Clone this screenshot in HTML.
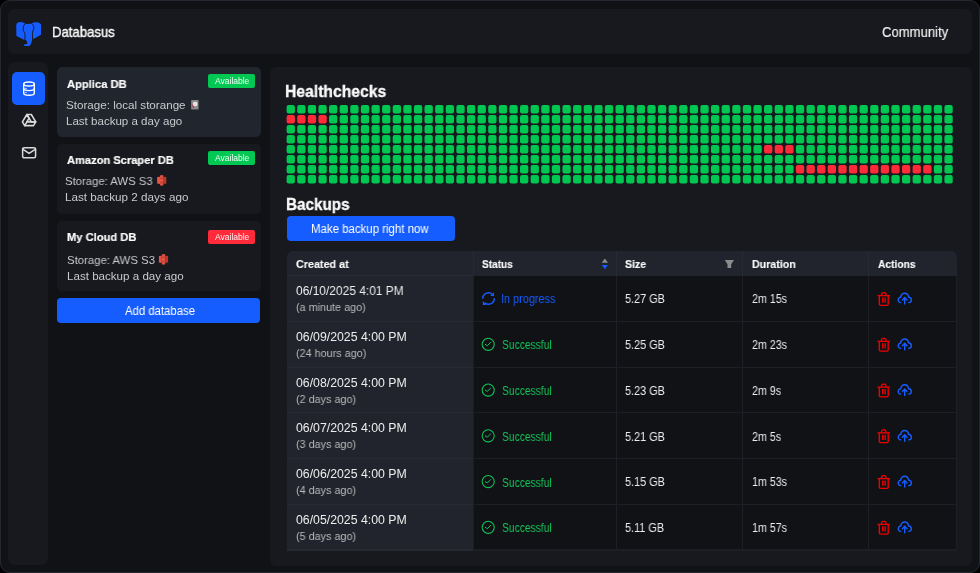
<!DOCTYPE html>
<html><head><meta charset="utf-8"><style>
*{box-sizing:border-box;margin:0;padding:0}
html,body{width:980px;height:573px;background:#000;overflow:hidden;font-family:"Liberation Sans",sans-serif;color:#f0f0f0}
.a{position:absolute}
.t{position:absolute;white-space:nowrap;line-height:40px;transform-origin:0 0;will-change:transform}
#frame{position:absolute;left:0;top:0;width:980px;height:573px;border-radius:10px;background:#111216;overflow:hidden}
#bord{position:absolute;left:0;top:0;width:980px;height:573px;border-radius:10px;border:1px solid #252830}
.panel{position:absolute;background:#18191e;border-radius:6px}
.card{position:absolute;left:57px;width:204px;height:70px;border-radius:5px;background:#18191e}
.card.sel{background:#21252e}
.badge{position:absolute;left:208px;width:47px;height:14px;border-radius:2px}
.green{background:#00c853}
.red{background:#ff2b3a}
.btn{position:absolute;background:#165dff;border-radius:4px}
</style></head><body>
<div id="frame">
<div class="panel" style="left:8px;top:9px;width:964px;height:45px"></div>
<div class="t" style="left:51.89px;top:12.00px;font-size:14.5px;font-weight:normal;color:#f8f8f8;transform:scaleX(0.9059);-webkit-text-stroke:0.4px #f8f8f8">Databasus</div>
<div class="t" style="left:881.90px;top:12.20px;font-size:14.5px;font-weight:normal;color:#f4f4f4;transform:scaleX(0.9041);-webkit-text-stroke:0.15px #f4f4f4">Community</div>
<div class="panel" style="left:8px;top:62px;width:40px;height:503px"></div>
<div class="a" style="left:12px;top:72px;width:33px;height:33px;border-radius:5px;background:#165dff"></div>
<div class="card sel" style="top:67px"></div>
<div class="card" style="top:144px"></div>
<div class="card" style="top:221px"></div>
<div class="badge green" style="top:74px"></div>
<div class="badge green" style="top:151.4px"></div>
<div class="badge red" style="top:230px"></div>
<div class="t" style="left:215.10px;top:60.80px;font-size:8.5px;font-weight:normal;color:#f4fff6;transform:scaleX(0.9971);">Available</div>
<div class="t" style="left:215.10px;top:138.20px;font-size:8.5px;font-weight:normal;color:#f4fff6;transform:scaleX(0.9971);">Available</div>
<div class="t" style="left:215.10px;top:216.80px;font-size:8.5px;font-weight:normal;color:#fff4f4;transform:scaleX(0.9971);">Available</div>
<div class="t" style="left:67.10px;top:63.60px;font-size:11.5px;font-weight:bold;color:#fcfcfc;transform:scaleX(0.9721);-webkit-text-stroke:0.2px #fcfcfc">Applica DB</div>
<div class="t" style="left:66.40px;top:84.90px;font-size:11.5px;font-weight:normal;color:#c9cacd;transform:scaleX(1.011);">Storage: local storange</div>
<div class="t" style="left:66.40px;top:101.00px;font-size:11.5px;font-weight:normal;color:#c9cacd;transform:scaleX(1.0043);">Last backup a day ago</div>
<div class="t" style="left:67.10px;top:140.00px;font-size:11.5px;font-weight:bold;color:#fcfcfc;transform:scaleX(0.9658);-webkit-text-stroke:0.2px #fcfcfc">Amazon Scraper DB</div>
<div class="t" style="left:65.40px;top:161.00px;font-size:11.5px;font-weight:normal;color:#c9cacd;transform:scaleX(0.9831);">Storage: AWS S3</div>
<div class="t" style="left:65.40px;top:176.70px;font-size:11.5px;font-weight:normal;color:#c9cacd;transform:scaleX(1.0157);">Last backup 2 days ago</div>
<div class="t" style="left:67.10px;top:217.30px;font-size:11.5px;font-weight:bold;color:#fcfcfc;transform:scaleX(0.9694);-webkit-text-stroke:0.2px #fcfcfc">My Cloud DB</div>
<div class="t" style="left:67.10px;top:240.10px;font-size:11.5px;font-weight:normal;color:#c9cacd;transform:scaleX(0.9876);">Storage: AWS S3</div>
<div class="t" style="left:67.10px;top:255.90px;font-size:11.5px;font-weight:normal;color:#c9cacd;transform:scaleX(1.0078);">Last backup a day ago</div>
<div class="btn" style="left:57px;top:298px;width:203px;height:25px"></div>
<div class="t" style="left:125.30px;top:290.60px;font-size:12.0px;font-weight:normal;color:#ffffff;transform:scaleX(0.9446);">Add database</div>
<div class="panel" style="left:270px;top:67px;width:702px;height:499px"></div>
<div class="t" style="left:285.38px;top:71.50px;font-size:17.0px;font-weight:bold;color:#fafafa;transform:scaleX(0.9229);-webkit-text-stroke:0.35px #fafafa">Healthchecks</div>
<svg class="a" style="left:0;top:0" width="980" height="200" viewBox="0 0 980 200"><defs><rect id="q" width="8.3" height="8.4" rx="2"/></defs><g transform="translate(286.6,105.0)"><g fill="#00c752"><use href="#q" x="0.00" y="0"/><use href="#q" x="10.61" y="0"/><use href="#q" x="21.22" y="0"/><use href="#q" x="31.83" y="0"/><use href="#q" x="42.44" y="0"/><use href="#q" x="53.05" y="0"/><use href="#q" x="63.66" y="0"/><use href="#q" x="74.27" y="0"/><use href="#q" x="84.88" y="0"/><use href="#q" x="95.49" y="0"/><use href="#q" x="106.10" y="0"/><use href="#q" x="116.71" y="0"/><use href="#q" x="127.32" y="0"/><use href="#q" x="137.93" y="0"/><use href="#q" x="148.54" y="0"/><use href="#q" x="159.15" y="0"/><use href="#q" x="169.76" y="0"/><use href="#q" x="180.37" y="0"/><use href="#q" x="190.98" y="0"/><use href="#q" x="201.59" y="0"/><use href="#q" x="212.20" y="0"/><use href="#q" x="222.81" y="0"/><use href="#q" x="233.42" y="0"/><use href="#q" x="244.03" y="0"/><use href="#q" x="254.64" y="0"/><use href="#q" x="265.25" y="0"/><use href="#q" x="275.86" y="0"/><use href="#q" x="286.47" y="0"/><use href="#q" x="297.08" y="0"/><use href="#q" x="307.69" y="0"/><use href="#q" x="318.30" y="0"/><use href="#q" x="328.91" y="0"/><use href="#q" x="339.52" y="0"/><use href="#q" x="350.13" y="0"/><use href="#q" x="360.74" y="0"/><use href="#q" x="371.35" y="0"/><use href="#q" x="381.96" y="0"/><use href="#q" x="392.57" y="0"/><use href="#q" x="403.18" y="0"/><use href="#q" x="413.79" y="0"/><use href="#q" x="424.40" y="0"/><use href="#q" x="435.01" y="0"/><use href="#q" x="445.62" y="0"/><use href="#q" x="456.23" y="0"/><use href="#q" x="466.84" y="0"/><use href="#q" x="477.45" y="0"/><use href="#q" x="488.06" y="0"/><use href="#q" x="498.67" y="0"/><use href="#q" x="509.28" y="0"/><use href="#q" x="519.89" y="0"/><use href="#q" x="530.50" y="0"/><use href="#q" x="541.11" y="0"/><use href="#q" x="551.72" y="0"/><use href="#q" x="562.33" y="0"/><use href="#q" x="572.94" y="0"/><use href="#q" x="583.55" y="0"/><use href="#q" x="594.16" y="0"/><use href="#q" x="604.77" y="0"/><use href="#q" x="615.38" y="0"/><use href="#q" x="625.99" y="0"/><use href="#q" x="636.60" y="0"/><use href="#q" x="647.21" y="0"/><use href="#q" x="657.82" y="0"/><use href="#q" x="42.44" y="10"/><use href="#q" x="53.05" y="10"/><use href="#q" x="63.66" y="10"/><use href="#q" x="74.27" y="10"/><use href="#q" x="84.88" y="10"/><use href="#q" x="95.49" y="10"/><use href="#q" x="106.10" y="10"/><use href="#q" x="116.71" y="10"/><use href="#q" x="127.32" y="10"/><use href="#q" x="137.93" y="10"/><use href="#q" x="148.54" y="10"/><use href="#q" x="159.15" y="10"/><use href="#q" x="169.76" y="10"/><use href="#q" x="180.37" y="10"/><use href="#q" x="190.98" y="10"/><use href="#q" x="201.59" y="10"/><use href="#q" x="212.20" y="10"/><use href="#q" x="222.81" y="10"/><use href="#q" x="233.42" y="10"/><use href="#q" x="244.03" y="10"/><use href="#q" x="254.64" y="10"/><use href="#q" x="265.25" y="10"/><use href="#q" x="275.86" y="10"/><use href="#q" x="286.47" y="10"/><use href="#q" x="297.08" y="10"/><use href="#q" x="307.69" y="10"/><use href="#q" x="318.30" y="10"/><use href="#q" x="328.91" y="10"/><use href="#q" x="339.52" y="10"/><use href="#q" x="350.13" y="10"/><use href="#q" x="360.74" y="10"/><use href="#q" x="371.35" y="10"/><use href="#q" x="381.96" y="10"/><use href="#q" x="392.57" y="10"/><use href="#q" x="403.18" y="10"/><use href="#q" x="413.79" y="10"/><use href="#q" x="424.40" y="10"/><use href="#q" x="435.01" y="10"/><use href="#q" x="445.62" y="10"/><use href="#q" x="456.23" y="10"/><use href="#q" x="466.84" y="10"/><use href="#q" x="477.45" y="10"/><use href="#q" x="488.06" y="10"/><use href="#q" x="498.67" y="10"/><use href="#q" x="509.28" y="10"/><use href="#q" x="519.89" y="10"/><use href="#q" x="530.50" y="10"/><use href="#q" x="541.11" y="10"/><use href="#q" x="551.72" y="10"/><use href="#q" x="562.33" y="10"/><use href="#q" x="572.94" y="10"/><use href="#q" x="583.55" y="10"/><use href="#q" x="594.16" y="10"/><use href="#q" x="604.77" y="10"/><use href="#q" x="615.38" y="10"/><use href="#q" x="625.99" y="10"/><use href="#q" x="636.60" y="10"/><use href="#q" x="647.21" y="10"/><use href="#q" x="657.82" y="10"/><use href="#q" x="0.00" y="20"/><use href="#q" x="10.61" y="20"/><use href="#q" x="21.22" y="20"/><use href="#q" x="31.83" y="20"/><use href="#q" x="42.44" y="20"/><use href="#q" x="53.05" y="20"/><use href="#q" x="63.66" y="20"/><use href="#q" x="74.27" y="20"/><use href="#q" x="84.88" y="20"/><use href="#q" x="95.49" y="20"/><use href="#q" x="106.10" y="20"/><use href="#q" x="116.71" y="20"/><use href="#q" x="127.32" y="20"/><use href="#q" x="137.93" y="20"/><use href="#q" x="148.54" y="20"/><use href="#q" x="159.15" y="20"/><use href="#q" x="169.76" y="20"/><use href="#q" x="180.37" y="20"/><use href="#q" x="190.98" y="20"/><use href="#q" x="201.59" y="20"/><use href="#q" x="212.20" y="20"/><use href="#q" x="222.81" y="20"/><use href="#q" x="233.42" y="20"/><use href="#q" x="244.03" y="20"/><use href="#q" x="254.64" y="20"/><use href="#q" x="265.25" y="20"/><use href="#q" x="275.86" y="20"/><use href="#q" x="286.47" y="20"/><use href="#q" x="297.08" y="20"/><use href="#q" x="307.69" y="20"/><use href="#q" x="318.30" y="20"/><use href="#q" x="328.91" y="20"/><use href="#q" x="339.52" y="20"/><use href="#q" x="350.13" y="20"/><use href="#q" x="360.74" y="20"/><use href="#q" x="371.35" y="20"/><use href="#q" x="381.96" y="20"/><use href="#q" x="392.57" y="20"/><use href="#q" x="403.18" y="20"/><use href="#q" x="413.79" y="20"/><use href="#q" x="424.40" y="20"/><use href="#q" x="435.01" y="20"/><use href="#q" x="445.62" y="20"/><use href="#q" x="456.23" y="20"/><use href="#q" x="466.84" y="20"/><use href="#q" x="477.45" y="20"/><use href="#q" x="488.06" y="20"/><use href="#q" x="498.67" y="20"/><use href="#q" x="509.28" y="20"/><use href="#q" x="519.89" y="20"/><use href="#q" x="530.50" y="20"/><use href="#q" x="541.11" y="20"/><use href="#q" x="551.72" y="20"/><use href="#q" x="562.33" y="20"/><use href="#q" x="572.94" y="20"/><use href="#q" x="583.55" y="20"/><use href="#q" x="594.16" y="20"/><use href="#q" x="604.77" y="20"/><use href="#q" x="615.38" y="20"/><use href="#q" x="625.99" y="20"/><use href="#q" x="636.60" y="20"/><use href="#q" x="647.21" y="20"/><use href="#q" x="657.82" y="20"/><use href="#q" x="0.00" y="30"/><use href="#q" x="10.61" y="30"/><use href="#q" x="21.22" y="30"/><use href="#q" x="31.83" y="30"/><use href="#q" x="42.44" y="30"/><use href="#q" x="53.05" y="30"/><use href="#q" x="63.66" y="30"/><use href="#q" x="74.27" y="30"/><use href="#q" x="84.88" y="30"/><use href="#q" x="95.49" y="30"/><use href="#q" x="106.10" y="30"/><use href="#q" x="116.71" y="30"/><use href="#q" x="127.32" y="30"/><use href="#q" x="137.93" y="30"/><use href="#q" x="148.54" y="30"/><use href="#q" x="159.15" y="30"/><use href="#q" x="169.76" y="30"/><use href="#q" x="180.37" y="30"/><use href="#q" x="190.98" y="30"/><use href="#q" x="201.59" y="30"/><use href="#q" x="212.20" y="30"/><use href="#q" x="222.81" y="30"/><use href="#q" x="233.42" y="30"/><use href="#q" x="244.03" y="30"/><use href="#q" x="254.64" y="30"/><use href="#q" x="265.25" y="30"/><use href="#q" x="275.86" y="30"/><use href="#q" x="286.47" y="30"/><use href="#q" x="297.08" y="30"/><use href="#q" x="307.69" y="30"/><use href="#q" x="318.30" y="30"/><use href="#q" x="328.91" y="30"/><use href="#q" x="339.52" y="30"/><use href="#q" x="350.13" y="30"/><use href="#q" x="360.74" y="30"/><use href="#q" x="371.35" y="30"/><use href="#q" x="381.96" y="30"/><use href="#q" x="392.57" y="30"/><use href="#q" x="403.18" y="30"/><use href="#q" x="413.79" y="30"/><use href="#q" x="424.40" y="30"/><use href="#q" x="435.01" y="30"/><use href="#q" x="445.62" y="30"/><use href="#q" x="456.23" y="30"/><use href="#q" x="466.84" y="30"/><use href="#q" x="477.45" y="30"/><use href="#q" x="488.06" y="30"/><use href="#q" x="498.67" y="30"/><use href="#q" x="509.28" y="30"/><use href="#q" x="519.89" y="30"/><use href="#q" x="530.50" y="30"/><use href="#q" x="541.11" y="30"/><use href="#q" x="551.72" y="30"/><use href="#q" x="562.33" y="30"/><use href="#q" x="572.94" y="30"/><use href="#q" x="583.55" y="30"/><use href="#q" x="594.16" y="30"/><use href="#q" x="604.77" y="30"/><use href="#q" x="615.38" y="30"/><use href="#q" x="625.99" y="30"/><use href="#q" x="636.60" y="30"/><use href="#q" x="647.21" y="30"/><use href="#q" x="657.82" y="30"/><use href="#q" x="0.00" y="40"/><use href="#q" x="10.61" y="40"/><use href="#q" x="21.22" y="40"/><use href="#q" x="31.83" y="40"/><use href="#q" x="42.44" y="40"/><use href="#q" x="53.05" y="40"/><use href="#q" x="63.66" y="40"/><use href="#q" x="74.27" y="40"/><use href="#q" x="84.88" y="40"/><use href="#q" x="95.49" y="40"/><use href="#q" x="106.10" y="40"/><use href="#q" x="116.71" y="40"/><use href="#q" x="127.32" y="40"/><use href="#q" x="137.93" y="40"/><use href="#q" x="148.54" y="40"/><use href="#q" x="159.15" y="40"/><use href="#q" x="169.76" y="40"/><use href="#q" x="180.37" y="40"/><use href="#q" x="190.98" y="40"/><use href="#q" x="201.59" y="40"/><use href="#q" x="212.20" y="40"/><use href="#q" x="222.81" y="40"/><use href="#q" x="233.42" y="40"/><use href="#q" x="244.03" y="40"/><use href="#q" x="254.64" y="40"/><use href="#q" x="265.25" y="40"/><use href="#q" x="275.86" y="40"/><use href="#q" x="286.47" y="40"/><use href="#q" x="297.08" y="40"/><use href="#q" x="307.69" y="40"/><use href="#q" x="318.30" y="40"/><use href="#q" x="328.91" y="40"/><use href="#q" x="339.52" y="40"/><use href="#q" x="350.13" y="40"/><use href="#q" x="360.74" y="40"/><use href="#q" x="371.35" y="40"/><use href="#q" x="381.96" y="40"/><use href="#q" x="392.57" y="40"/><use href="#q" x="403.18" y="40"/><use href="#q" x="413.79" y="40"/><use href="#q" x="424.40" y="40"/><use href="#q" x="435.01" y="40"/><use href="#q" x="445.62" y="40"/><use href="#q" x="456.23" y="40"/><use href="#q" x="466.84" y="40"/><use href="#q" x="509.28" y="40"/><use href="#q" x="519.89" y="40"/><use href="#q" x="530.50" y="40"/><use href="#q" x="541.11" y="40"/><use href="#q" x="551.72" y="40"/><use href="#q" x="562.33" y="40"/><use href="#q" x="572.94" y="40"/><use href="#q" x="583.55" y="40"/><use href="#q" x="594.16" y="40"/><use href="#q" x="604.77" y="40"/><use href="#q" x="615.38" y="40"/><use href="#q" x="625.99" y="40"/><use href="#q" x="636.60" y="40"/><use href="#q" x="647.21" y="40"/><use href="#q" x="657.82" y="40"/><use href="#q" x="0.00" y="50"/><use href="#q" x="10.61" y="50"/><use href="#q" x="21.22" y="50"/><use href="#q" x="31.83" y="50"/><use href="#q" x="42.44" y="50"/><use href="#q" x="53.05" y="50"/><use href="#q" x="63.66" y="50"/><use href="#q" x="74.27" y="50"/><use href="#q" x="84.88" y="50"/><use href="#q" x="95.49" y="50"/><use href="#q" x="106.10" y="50"/><use href="#q" x="116.71" y="50"/><use href="#q" x="127.32" y="50"/><use href="#q" x="137.93" y="50"/><use href="#q" x="148.54" y="50"/><use href="#q" x="159.15" y="50"/><use href="#q" x="169.76" y="50"/><use href="#q" x="180.37" y="50"/><use href="#q" x="190.98" y="50"/><use href="#q" x="201.59" y="50"/><use href="#q" x="212.20" y="50"/><use href="#q" x="222.81" y="50"/><use href="#q" x="233.42" y="50"/><use href="#q" x="244.03" y="50"/><use href="#q" x="254.64" y="50"/><use href="#q" x="265.25" y="50"/><use href="#q" x="275.86" y="50"/><use href="#q" x="286.47" y="50"/><use href="#q" x="297.08" y="50"/><use href="#q" x="307.69" y="50"/><use href="#q" x="318.30" y="50"/><use href="#q" x="328.91" y="50"/><use href="#q" x="339.52" y="50"/><use href="#q" x="350.13" y="50"/><use href="#q" x="360.74" y="50"/><use href="#q" x="371.35" y="50"/><use href="#q" x="381.96" y="50"/><use href="#q" x="392.57" y="50"/><use href="#q" x="403.18" y="50"/><use href="#q" x="413.79" y="50"/><use href="#q" x="424.40" y="50"/><use href="#q" x="435.01" y="50"/><use href="#q" x="445.62" y="50"/><use href="#q" x="456.23" y="50"/><use href="#q" x="466.84" y="50"/><use href="#q" x="477.45" y="50"/><use href="#q" x="488.06" y="50"/><use href="#q" x="498.67" y="50"/><use href="#q" x="509.28" y="50"/><use href="#q" x="519.89" y="50"/><use href="#q" x="530.50" y="50"/><use href="#q" x="541.11" y="50"/><use href="#q" x="551.72" y="50"/><use href="#q" x="562.33" y="50"/><use href="#q" x="572.94" y="50"/><use href="#q" x="583.55" y="50"/><use href="#q" x="594.16" y="50"/><use href="#q" x="604.77" y="50"/><use href="#q" x="615.38" y="50"/><use href="#q" x="625.99" y="50"/><use href="#q" x="636.60" y="50"/><use href="#q" x="647.21" y="50"/><use href="#q" x="657.82" y="50"/><use href="#q" x="0.00" y="60"/><use href="#q" x="10.61" y="60"/><use href="#q" x="21.22" y="60"/><use href="#q" x="31.83" y="60"/><use href="#q" x="42.44" y="60"/><use href="#q" x="53.05" y="60"/><use href="#q" x="63.66" y="60"/><use href="#q" x="74.27" y="60"/><use href="#q" x="84.88" y="60"/><use href="#q" x="95.49" y="60"/><use href="#q" x="106.10" y="60"/><use href="#q" x="116.71" y="60"/><use href="#q" x="127.32" y="60"/><use href="#q" x="137.93" y="60"/><use href="#q" x="148.54" y="60"/><use href="#q" x="159.15" y="60"/><use href="#q" x="169.76" y="60"/><use href="#q" x="180.37" y="60"/><use href="#q" x="190.98" y="60"/><use href="#q" x="201.59" y="60"/><use href="#q" x="212.20" y="60"/><use href="#q" x="222.81" y="60"/><use href="#q" x="233.42" y="60"/><use href="#q" x="244.03" y="60"/><use href="#q" x="254.64" y="60"/><use href="#q" x="265.25" y="60"/><use href="#q" x="275.86" y="60"/><use href="#q" x="286.47" y="60"/><use href="#q" x="297.08" y="60"/><use href="#q" x="307.69" y="60"/><use href="#q" x="318.30" y="60"/><use href="#q" x="328.91" y="60"/><use href="#q" x="339.52" y="60"/><use href="#q" x="350.13" y="60"/><use href="#q" x="360.74" y="60"/><use href="#q" x="371.35" y="60"/><use href="#q" x="381.96" y="60"/><use href="#q" x="392.57" y="60"/><use href="#q" x="403.18" y="60"/><use href="#q" x="413.79" y="60"/><use href="#q" x="424.40" y="60"/><use href="#q" x="435.01" y="60"/><use href="#q" x="445.62" y="60"/><use href="#q" x="456.23" y="60"/><use href="#q" x="466.84" y="60"/><use href="#q" x="477.45" y="60"/><use href="#q" x="488.06" y="60"/><use href="#q" x="498.67" y="60"/><use href="#q" x="647.21" y="60"/><use href="#q" x="657.82" y="60"/><use href="#q" x="0.00" y="70"/><use href="#q" x="10.61" y="70"/><use href="#q" x="21.22" y="70"/><use href="#q" x="31.83" y="70"/><use href="#q" x="42.44" y="70"/><use href="#q" x="53.05" y="70"/><use href="#q" x="63.66" y="70"/><use href="#q" x="74.27" y="70"/><use href="#q" x="84.88" y="70"/><use href="#q" x="95.49" y="70"/><use href="#q" x="106.10" y="70"/><use href="#q" x="116.71" y="70"/><use href="#q" x="127.32" y="70"/><use href="#q" x="137.93" y="70"/><use href="#q" x="148.54" y="70"/><use href="#q" x="159.15" y="70"/><use href="#q" x="169.76" y="70"/><use href="#q" x="180.37" y="70"/><use href="#q" x="190.98" y="70"/><use href="#q" x="201.59" y="70"/><use href="#q" x="212.20" y="70"/><use href="#q" x="222.81" y="70"/><use href="#q" x="233.42" y="70"/><use href="#q" x="244.03" y="70"/><use href="#q" x="254.64" y="70"/><use href="#q" x="265.25" y="70"/><use href="#q" x="275.86" y="70"/><use href="#q" x="286.47" y="70"/><use href="#q" x="297.08" y="70"/><use href="#q" x="307.69" y="70"/><use href="#q" x="318.30" y="70"/><use href="#q" x="328.91" y="70"/><use href="#q" x="339.52" y="70"/><use href="#q" x="350.13" y="70"/><use href="#q" x="360.74" y="70"/><use href="#q" x="371.35" y="70"/><use href="#q" x="381.96" y="70"/><use href="#q" x="392.57" y="70"/><use href="#q" x="403.18" y="70"/><use href="#q" x="413.79" y="70"/><use href="#q" x="424.40" y="70"/><use href="#q" x="435.01" y="70"/><use href="#q" x="445.62" y="70"/><use href="#q" x="456.23" y="70"/><use href="#q" x="466.84" y="70"/><use href="#q" x="477.45" y="70"/><use href="#q" x="488.06" y="70"/><use href="#q" x="498.67" y="70"/><use href="#q" x="509.28" y="70"/><use href="#q" x="519.89" y="70"/><use href="#q" x="530.50" y="70"/><use href="#q" x="541.11" y="70"/><use href="#q" x="551.72" y="70"/><use href="#q" x="562.33" y="70"/><use href="#q" x="572.94" y="70"/><use href="#q" x="583.55" y="70"/><use href="#q" x="594.16" y="70"/><use href="#q" x="604.77" y="70"/><use href="#q" x="615.38" y="70"/><use href="#q" x="625.99" y="70"/><use href="#q" x="636.60" y="70"/><use href="#q" x="647.21" y="70"/><use href="#q" x="657.82" y="70"/></g><g fill="#ff2b39"><use href="#q" x="0.00" y="10"/><use href="#q" x="10.61" y="10"/><use href="#q" x="21.22" y="10"/><use href="#q" x="31.83" y="10"/><use href="#q" x="477.45" y="40"/><use href="#q" x="488.06" y="40"/><use href="#q" x="498.67" y="40"/><use href="#q" x="509.28" y="60"/><use href="#q" x="519.89" y="60"/><use href="#q" x="530.50" y="60"/><use href="#q" x="541.11" y="60"/><use href="#q" x="551.72" y="60"/><use href="#q" x="562.33" y="60"/><use href="#q" x="572.94" y="60"/><use href="#q" x="583.55" y="60"/><use href="#q" x="594.16" y="60"/><use href="#q" x="604.77" y="60"/><use href="#q" x="615.38" y="60"/><use href="#q" x="625.99" y="60"/><use href="#q" x="636.60" y="60"/></g></g></svg>
<div class="t" style="left:286.40px;top:184.50px;font-size:17.0px;font-weight:bold;color:#fafafa;transform:scaleX(0.8957);-webkit-text-stroke:0.35px #fafafa">Backups</div>
<div class="btn" style="left:287px;top:216px;width:168px;height:25px"></div>
<div class="t" style="left:311.15px;top:209.00px;font-size:12.0px;font-weight:normal;color:#ffffff;transform:scaleX(0.9528);">Make backup right now</div>
<div class="a" style="left:287px;top:251px;width:670px;height:299.5px;overflow:hidden;border-radius:6px 6px 0 0">
<div class="a" style="left:0;top:0;width:670px;height:24.5px;background:#21242d"></div>
<div class="a" style="left:0;top:24.5px;width:186px;height:275px;background:#21242d"></div>
<div class="a" style="left:186px;top:24.5px;width:484px;height:275px;background:#111216"></div>
<div class="a" style="left:0;top:23.5px;width:186px;height:1px;background:#282b34"></div>
<div class="a" style="left:669px;top:24.5px;width:1px;height:275px;background:#1d1f25"></div>
<div class="a" style="left:186px;top:0;width:1px;height:24.5px;background:#262a33"></div>
<div class="a" style="left:186px;top:24.5px;width:1px;height:275px;background:#1d1f25"></div>
<div class="a" style="left:329px;top:0;width:1px;height:24.5px;background:#262a33"></div>
<div class="a" style="left:329px;top:24.5px;width:1px;height:275px;background:#1d1f25"></div>
<div class="a" style="left:455px;top:0;width:1px;height:24.5px;background:#262a33"></div>
<div class="a" style="left:455px;top:24.5px;width:1px;height:275px;background:#1d1f25"></div>
<div class="a" style="left:581px;top:0;width:1px;height:24.5px;background:#262a33"></div>
<div class="a" style="left:581px;top:24.5px;width:1px;height:275px;background:#1d1f25"></div>
<div class="a" style="left:0;top:69.75px;width:186px;height:1px;background:#262a33"></div>
<div class="a" style="left:186px;top:69.75px;width:484px;height:1px;background:#1d1f25"></div>
<div class="a" style="left:0;top:115.50px;width:186px;height:1px;background:#262a33"></div>
<div class="a" style="left:186px;top:115.50px;width:484px;height:1px;background:#1d1f25"></div>
<div class="a" style="left:0;top:161.25px;width:186px;height:1px;background:#262a33"></div>
<div class="a" style="left:186px;top:161.25px;width:484px;height:1px;background:#1d1f25"></div>
<div class="a" style="left:0;top:207.00px;width:186px;height:1px;background:#262a33"></div>
<div class="a" style="left:186px;top:207.00px;width:484px;height:1px;background:#1d1f25"></div>
<div class="a" style="left:0;top:252.75px;width:186px;height:1px;background:#262a33"></div>
<div class="a" style="left:186px;top:252.75px;width:484px;height:1px;background:#1d1f25"></div>
<div class="a" style="left:0;top:298.00px;width:186px;height:1.5px;background:#262a33"></div>
<div class="a" style="left:186px;top:298.00px;width:484px;height:1.5px;background:#1d1f25"></div>
</div>
<div class="t" style="left:296.30px;top:244.00px;font-size:11.5px;font-weight:bold;color:#fafafa;transform:scaleX(0.9368);-webkit-text-stroke:0.15px #fafafa">Created at</div>
<div class="t" style="left:482.10px;top:243.90px;font-size:11.5px;font-weight:bold;color:#fafafa;transform:scaleX(0.8743);-webkit-text-stroke:0.15px #fafafa">Status</div>
<div class="t" style="left:624.60px;top:243.90px;font-size:11.5px;font-weight:bold;color:#fafafa;transform:scaleX(0.9217);-webkit-text-stroke:0.15px #fafafa">Size</div>
<div class="t" style="left:751.50px;top:243.90px;font-size:11.5px;font-weight:bold;color:#fafafa;transform:scaleX(0.9255);-webkit-text-stroke:0.15px #fafafa">Duration</div>
<div class="t" style="left:877.60px;top:243.90px;font-size:11.5px;font-weight:bold;color:#fafafa;transform:scaleX(0.8905);-webkit-text-stroke:0.15px #fafafa">Actions</div>
<div class="t" style="left:295.90px;top:271.10px;font-size:12.0px;font-weight:normal;color:#ededed;transform:scaleX(0.9963);">06/10/2025 4:01 PM</div>
<div class="t" style="left:295.80px;top:287.15px;font-size:11.5px;font-weight:normal;color:#bababa;transform:scaleX(0.94);">(a minute ago)</div>
<div class="t" style="left:501.19px;top:278.70px;font-size:12.0px;font-weight:normal;color:#165dff;transform:scaleX(0.9068);">In progress</div>
<div class="t" style="left:625.00px;top:279.30px;font-size:12.0px;font-weight:normal;color:#ededed;transform:scaleX(0.9045);">5.27 GB</div>
<div class="t" style="left:751.50px;top:279.30px;font-size:12.0px;font-weight:normal;color:#ededed;transform:scaleX(0.8897);">2m 15s</div>
<div class="t" style="left:295.90px;top:316.85px;font-size:12.0px;font-weight:normal;color:#ededed;transform:scaleX(1.0241);">06/09/2025 4:00 PM</div>
<div class="t" style="left:295.80px;top:332.90px;font-size:11.5px;font-weight:normal;color:#bababa;transform:scaleX(0.94);">(24 hours ago)</div>
<div class="t" style="left:501.90px;top:325.30px;font-size:12.0px;font-weight:normal;color:#14c459;transform:scaleX(0.8569);">Successful</div>
<div class="t" style="left:625.00px;top:325.05px;font-size:12.0px;font-weight:normal;color:#ededed;transform:scaleX(0.9045);">5.25 GB</div>
<div class="t" style="left:751.50px;top:325.05px;font-size:12.0px;font-weight:normal;color:#ededed;transform:scaleX(0.8897);">2m 23s</div>
<div class="t" style="left:295.90px;top:362.60px;font-size:12.0px;font-weight:normal;color:#ededed;transform:scaleX(1.0241);">06/08/2025 4:00 PM</div>
<div class="t" style="left:295.80px;top:378.65px;font-size:11.5px;font-weight:normal;color:#bababa;transform:scaleX(0.94);">(2 days ago)</div>
<div class="t" style="left:501.90px;top:371.05px;font-size:12.0px;font-weight:normal;color:#14c459;transform:scaleX(0.8569);">Successful</div>
<div class="t" style="left:625.00px;top:370.80px;font-size:12.0px;font-weight:normal;color:#ededed;transform:scaleX(0.9045);">5.23 GB</div>
<div class="t" style="left:751.50px;top:370.80px;font-size:12.0px;font-weight:normal;color:#ededed;transform:scaleX(0.8897);">2m 9s</div>
<div class="t" style="left:295.90px;top:408.35px;font-size:12.0px;font-weight:normal;color:#ededed;transform:scaleX(1.0241);">06/07/2025 4:00 PM</div>
<div class="t" style="left:295.80px;top:424.40px;font-size:11.5px;font-weight:normal;color:#bababa;transform:scaleX(0.94);">(3 days ago)</div>
<div class="t" style="left:501.90px;top:416.80px;font-size:12.0px;font-weight:normal;color:#14c459;transform:scaleX(0.8569);">Successful</div>
<div class="t" style="left:625.00px;top:416.55px;font-size:12.0px;font-weight:normal;color:#ededed;transform:scaleX(0.9045);">5.21 GB</div>
<div class="t" style="left:751.50px;top:416.55px;font-size:12.0px;font-weight:normal;color:#ededed;transform:scaleX(0.8897);">2m 5s</div>
<div class="t" style="left:295.90px;top:454.10px;font-size:12.0px;font-weight:normal;color:#ededed;transform:scaleX(1.0241);">06/06/2025 4:00 PM</div>
<div class="t" style="left:295.80px;top:470.15px;font-size:11.5px;font-weight:normal;color:#bababa;transform:scaleX(0.94);">(4 days ago)</div>
<div class="t" style="left:501.90px;top:462.55px;font-size:12.0px;font-weight:normal;color:#14c459;transform:scaleX(0.8569);">Successful</div>
<div class="t" style="left:625.00px;top:462.30px;font-size:12.0px;font-weight:normal;color:#ededed;transform:scaleX(0.9045);">5.15 GB</div>
<div class="t" style="left:751.50px;top:462.30px;font-size:12.0px;font-weight:normal;color:#ededed;transform:scaleX(0.8897);">1m 53s</div>
<div class="t" style="left:295.90px;top:499.85px;font-size:12.0px;font-weight:normal;color:#ededed;transform:scaleX(1.0241);">06/05/2025 4:00 PM</div>
<div class="t" style="left:295.80px;top:515.90px;font-size:11.5px;font-weight:normal;color:#bababa;transform:scaleX(0.94);">(5 days ago)</div>
<div class="t" style="left:501.90px;top:508.30px;font-size:12.0px;font-weight:normal;color:#14c459;transform:scaleX(0.8569);">Successful</div>
<div class="t" style="left:625.00px;top:508.05px;font-size:12.0px;font-weight:normal;color:#ededed;transform:scaleX(0.9045);">5.11 GB</div>
<div class="t" style="left:751.50px;top:508.05px;font-size:12.0px;font-weight:normal;color:#ededed;transform:scaleX(0.8897);">1m 57s</div>
<svg class="a" style="left:0;top:0" width="980" height="573" viewBox="0 0 980 573"><path fill="#165dff" d="M16.2,25.6 Q16.2,22.3 20.4,22.1 Q23.6,22.4 25.2,23.3 L25.6,24.0 L31.2,23.7 L31.8,23.1 Q33.6,22.3 36.4,22.2 Q41.1,22.4 41.1,25.6 L41.0,34.8 L33.4,39.1 L32.4,38.5 L31.4,42.6 Q30.7,45.2 29.4,46.0 L25.4,46.1 Q23.6,45.9 23.8,45.0 Q24.2,44.0 25.5,44.2 Q27.3,44.4 27.3,42.7 Q27.1,40.9 25.9,39.9 L24.4,40.0 L16.4,35.9 Z"/><path fill="none" stroke="#18191e" stroke-width="0.95" d="M25.3,23.2 C23.3,25.5 22.9,28.3 23.4,30.4 C23.8,32 25.0,32.8 25.0,34.5 L24.9,40.3"/><path fill="none" stroke="#18191e" stroke-width="0.95" d="M31.6,23.2 C33.0,24.5 34.2,26.5 33.8,28.2 C33.4,29.7 32.6,31.2 32.5,33.2 L32.5,39.3"/><g fill="none" stroke="#fff" stroke-width="1.4" stroke-linecap="round"><ellipse cx="29" cy="84" rx="5.3" ry="2"/><path d="M23.7,84 V93.2 A5.3,2 0 0 0 34.3,93.2 V84"/><path d="M23.7,88.6 A5.3,2 0 0 0 34.3,88.6"/><path stroke-width="1" opacity="0.7" d="M25.3,88.4 h1.2 M25.3,92.6 h1.2"/></g><g transform="translate(20.2,110.8) scale(0.74)" fill="none" stroke="#d9d9d9" stroke-width="2.1" stroke-linejoin="round" stroke-linecap="round"><path d="M12 10l-6 10l-3 -5l6 -10z"/><path d="M9 15h12l-3 5h-12"/><path d="M15 15l-6 -10h6l6 10z"/></g><g transform="translate(20.46,144.1) scale(0.72)" fill="none" stroke="#d9d9d9" stroke-width="2.1" stroke-linejoin="round" stroke-linecap="round"><path d="M3 7a2 2 0 0 1 2 -2h14a2 2 0 0 1 2 2v10a2 2 0 0 1 -2 2h-14a2 2 0 0 1 -2 -2v-10z"/><path d="M3 7l9 6l9 -6"/></g><rect x="191.1" y="99.9" width="7.5" height="9.7" rx="0.6" fill="#7d7d7d"/><rect x="191.7" y="100.5" width="6.3" height="8.5" rx="0.4" fill="#8e8e8e"/><circle cx="195.2" cy="104.0" r="2.3" fill="#ededed"/><circle cx="195.2" cy="104.0" r="0.6" fill="#9a9a9a"/><path d="M192.3,103.8 L194.2,107.6 L193.2,108.2 L192.2,106 Z" fill="#b8334a"/><g transform="translate(157.1,174.9)"><path fill="#e25444" d="M0,2.2 L2.9,1.8 L2.9,9.1 L0,8.7 Z"/><path fill="#b93a2c" d="M9.2,2.2 L6.3,1.8 L6.3,9.1 L9.2,8.7 Z"/><path fill="#e05243" d="M2.9,0.6 L4.6,0 L6.3,0.6 L6.3,10.3 L4.6,10.9 L2.9,10.3 Z"/><path fill="#8c3123" opacity="0.55" d="M2.9,3.2 L6.3,2.6 L6.3,3.4 L2.9,4 Z M2.9,7.2 L6.3,7.8 L6.3,8.6 L2.9,8 Z"/></g><g transform="translate(158.9,253.9)"><path fill="#e25444" d="M0,2.2 L2.9,1.8 L2.9,9.1 L0,8.7 Z"/><path fill="#b93a2c" d="M9.2,2.2 L6.3,1.8 L6.3,9.1 L9.2,8.7 Z"/><path fill="#e05243" d="M2.9,0.6 L4.6,0 L6.3,0.6 L6.3,10.3 L4.6,10.9 L2.9,10.3 Z"/><path fill="#8c3123" opacity="0.55" d="M2.9,3.2 L6.3,2.6 L6.3,3.4 L2.9,4 Z M2.9,7.2 L6.3,7.8 L6.3,8.6 L2.9,8 Z"/></g><path fill="#8c8c8c" d="M601.7,262.8 L604.85,258.6 L608,262.8 Z"/><path fill="#165dff" d="M601.7,264.9 L608,264.9 L604.85,269.1 Z"/><path fill="#8c8c8c" d="M724.8,259.9 L734,259.9 L731.2,264.3 L731.2,268 L727.5,268 L727.5,264.3 Z"/><g fill="none" stroke="#165dff" stroke-width="1.5"><path d="M482.7,298.8 A5.8,5.8 0 0 1 492.3,294.2"/><path d="M494.3,298.2 A5.8,5.8 0 0 1 484.7,302.8"/></g><path fill="#165dff" d="M494,292.2 L494,296 L490.2,296 Z"/><path fill="#165dff" d="M482.8,301.1 L486.6,305 L482.8,305 Z"/><g transform="translate(0,0.00)" fill="none" stroke="#f00000" stroke-width="1.35" stroke-linejoin="round"><path d="M877.5,295.6 H890"/><path d="M881.6,295.4 V294.2 A1.3,1.3 0 0 1 882.9,292.7 H884.6 A1.3,1.3 0 0 1 885.9,294.2 V295.4"/><path d="M879.3,296 V304.2 A1.2,1.2 0 0 0 880.5,305.3 H887 A1.2,1.2 0 0 0 888.2,304.2 V296"/><path d="M882.7,297.4 V302.7 M885.1,297.4 V302.7"/></g><g transform="translate(0,0.00)" fill="none" stroke="#165dff" stroke-width="1.4" stroke-linecap="round" stroke-linejoin="round"><path d="M900.6,302.6 C898.6,302.4 897.7,300.4 898.5,298.8 C899.0,297.8 899.8,297.3 900.6,297.3 C901.2,294.6 902.9,293.3 904.6,293.3 C906.6,293.3 908.2,294.8 908.6,297.0 C910.2,297.3 911.3,298.6 911.3,300.0 C911.3,301.6 910.0,302.6 908.7,302.6"/><path d="M904.7,304 V297.8 M902.4,300 L904.7,297.6 L907,300"/></g><g transform="translate(0,45.75)" fill="none" stroke="#12c459" stroke-width="1.05"><circle cx="488.2" cy="298.55" r="6.05"/><path d="M485.3,298.6 L487.3,300.0 L490.6,296.6" stroke-width="1.0" stroke-linecap="round" stroke-linejoin="round"/></g><g transform="translate(0,45.75)" fill="none" stroke="#f00000" stroke-width="1.35" stroke-linejoin="round"><path d="M877.5,295.6 H890"/><path d="M881.6,295.4 V294.2 A1.3,1.3 0 0 1 882.9,292.7 H884.6 A1.3,1.3 0 0 1 885.9,294.2 V295.4"/><path d="M879.3,296 V304.2 A1.2,1.2 0 0 0 880.5,305.3 H887 A1.2,1.2 0 0 0 888.2,304.2 V296"/><path d="M882.7,297.4 V302.7 M885.1,297.4 V302.7"/></g><g transform="translate(0,45.75)" fill="none" stroke="#165dff" stroke-width="1.4" stroke-linecap="round" stroke-linejoin="round"><path d="M900.6,302.6 C898.6,302.4 897.7,300.4 898.5,298.8 C899.0,297.8 899.8,297.3 900.6,297.3 C901.2,294.6 902.9,293.3 904.6,293.3 C906.6,293.3 908.2,294.8 908.6,297.0 C910.2,297.3 911.3,298.6 911.3,300.0 C911.3,301.6 910.0,302.6 908.7,302.6"/><path d="M904.7,304 V297.8 M902.4,300 L904.7,297.6 L907,300"/></g><g transform="translate(0,91.50)" fill="none" stroke="#12c459" stroke-width="1.05"><circle cx="488.2" cy="298.55" r="6.05"/><path d="M485.3,298.6 L487.3,300.0 L490.6,296.6" stroke-width="1.0" stroke-linecap="round" stroke-linejoin="round"/></g><g transform="translate(0,91.50)" fill="none" stroke="#f00000" stroke-width="1.35" stroke-linejoin="round"><path d="M877.5,295.6 H890"/><path d="M881.6,295.4 V294.2 A1.3,1.3 0 0 1 882.9,292.7 H884.6 A1.3,1.3 0 0 1 885.9,294.2 V295.4"/><path d="M879.3,296 V304.2 A1.2,1.2 0 0 0 880.5,305.3 H887 A1.2,1.2 0 0 0 888.2,304.2 V296"/><path d="M882.7,297.4 V302.7 M885.1,297.4 V302.7"/></g><g transform="translate(0,91.50)" fill="none" stroke="#165dff" stroke-width="1.4" stroke-linecap="round" stroke-linejoin="round"><path d="M900.6,302.6 C898.6,302.4 897.7,300.4 898.5,298.8 C899.0,297.8 899.8,297.3 900.6,297.3 C901.2,294.6 902.9,293.3 904.6,293.3 C906.6,293.3 908.2,294.8 908.6,297.0 C910.2,297.3 911.3,298.6 911.3,300.0 C911.3,301.6 910.0,302.6 908.7,302.6"/><path d="M904.7,304 V297.8 M902.4,300 L904.7,297.6 L907,300"/></g><g transform="translate(0,137.25)" fill="none" stroke="#12c459" stroke-width="1.05"><circle cx="488.2" cy="298.55" r="6.05"/><path d="M485.3,298.6 L487.3,300.0 L490.6,296.6" stroke-width="1.0" stroke-linecap="round" stroke-linejoin="round"/></g><g transform="translate(0,137.25)" fill="none" stroke="#f00000" stroke-width="1.35" stroke-linejoin="round"><path d="M877.5,295.6 H890"/><path d="M881.6,295.4 V294.2 A1.3,1.3 0 0 1 882.9,292.7 H884.6 A1.3,1.3 0 0 1 885.9,294.2 V295.4"/><path d="M879.3,296 V304.2 A1.2,1.2 0 0 0 880.5,305.3 H887 A1.2,1.2 0 0 0 888.2,304.2 V296"/><path d="M882.7,297.4 V302.7 M885.1,297.4 V302.7"/></g><g transform="translate(0,137.25)" fill="none" stroke="#165dff" stroke-width="1.4" stroke-linecap="round" stroke-linejoin="round"><path d="M900.6,302.6 C898.6,302.4 897.7,300.4 898.5,298.8 C899.0,297.8 899.8,297.3 900.6,297.3 C901.2,294.6 902.9,293.3 904.6,293.3 C906.6,293.3 908.2,294.8 908.6,297.0 C910.2,297.3 911.3,298.6 911.3,300.0 C911.3,301.6 910.0,302.6 908.7,302.6"/><path d="M904.7,304 V297.8 M902.4,300 L904.7,297.6 L907,300"/></g><g transform="translate(0,183.00)" fill="none" stroke="#12c459" stroke-width="1.05"><circle cx="488.2" cy="298.55" r="6.05"/><path d="M485.3,298.6 L487.3,300.0 L490.6,296.6" stroke-width="1.0" stroke-linecap="round" stroke-linejoin="round"/></g><g transform="translate(0,183.00)" fill="none" stroke="#f00000" stroke-width="1.35" stroke-linejoin="round"><path d="M877.5,295.6 H890"/><path d="M881.6,295.4 V294.2 A1.3,1.3 0 0 1 882.9,292.7 H884.6 A1.3,1.3 0 0 1 885.9,294.2 V295.4"/><path d="M879.3,296 V304.2 A1.2,1.2 0 0 0 880.5,305.3 H887 A1.2,1.2 0 0 0 888.2,304.2 V296"/><path d="M882.7,297.4 V302.7 M885.1,297.4 V302.7"/></g><g transform="translate(0,183.00)" fill="none" stroke="#165dff" stroke-width="1.4" stroke-linecap="round" stroke-linejoin="round"><path d="M900.6,302.6 C898.6,302.4 897.7,300.4 898.5,298.8 C899.0,297.8 899.8,297.3 900.6,297.3 C901.2,294.6 902.9,293.3 904.6,293.3 C906.6,293.3 908.2,294.8 908.6,297.0 C910.2,297.3 911.3,298.6 911.3,300.0 C911.3,301.6 910.0,302.6 908.7,302.6"/><path d="M904.7,304 V297.8 M902.4,300 L904.7,297.6 L907,300"/></g><g transform="translate(0,228.75)" fill="none" stroke="#12c459" stroke-width="1.05"><circle cx="488.2" cy="298.55" r="6.05"/><path d="M485.3,298.6 L487.3,300.0 L490.6,296.6" stroke-width="1.0" stroke-linecap="round" stroke-linejoin="round"/></g><g transform="translate(0,228.75)" fill="none" stroke="#f00000" stroke-width="1.35" stroke-linejoin="round"><path d="M877.5,295.6 H890"/><path d="M881.6,295.4 V294.2 A1.3,1.3 0 0 1 882.9,292.7 H884.6 A1.3,1.3 0 0 1 885.9,294.2 V295.4"/><path d="M879.3,296 V304.2 A1.2,1.2 0 0 0 880.5,305.3 H887 A1.2,1.2 0 0 0 888.2,304.2 V296"/><path d="M882.7,297.4 V302.7 M885.1,297.4 V302.7"/></g><g transform="translate(0,228.75)" fill="none" stroke="#165dff" stroke-width="1.4" stroke-linecap="round" stroke-linejoin="round"><path d="M900.6,302.6 C898.6,302.4 897.7,300.4 898.5,298.8 C899.0,297.8 899.8,297.3 900.6,297.3 C901.2,294.6 902.9,293.3 904.6,293.3 C906.6,293.3 908.2,294.8 908.6,297.0 C910.2,297.3 911.3,298.6 911.3,300.0 C911.3,301.6 910.0,302.6 908.7,302.6"/><path d="M904.7,304 V297.8 M902.4,300 L904.7,297.6 L907,300"/></g></svg>
</div><div id="bord"></div>
</body></html>
